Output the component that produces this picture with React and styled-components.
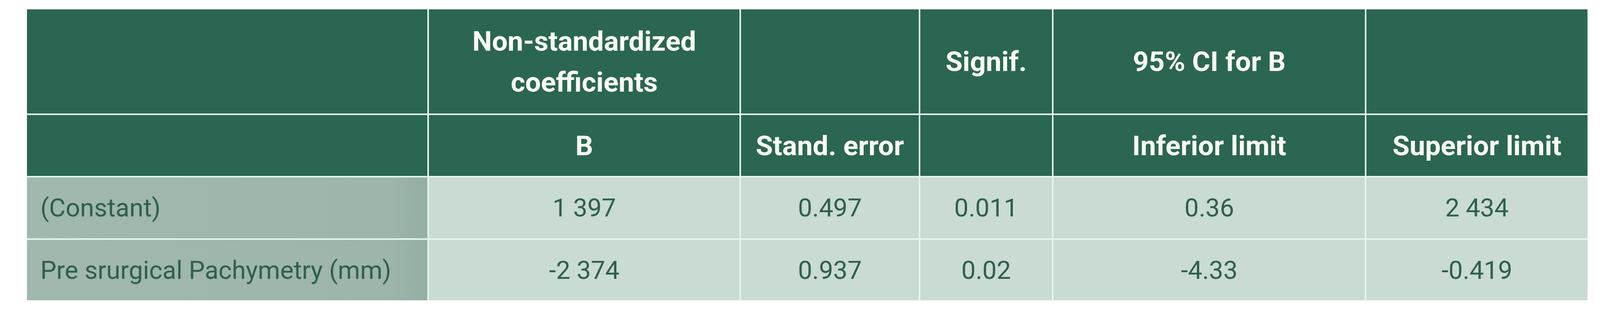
import styled, { createGlobalStyle } from "styled-components";

const GlobalStyle = createGlobalStyle`
  html, body {
    margin: 0;
    padding: 0;
    background: #ffffff;
  }
  body {
    font-family: Roboto, "Liberation Sans", sans-serif;
  }
`;

// Sizes were taken from a 5474px wide frame; widths and type scale with the viewport
// so the whole table stays visible when the window is narrower.
export const Page = styled.div`
  width: 100%;
  height: 800px;
  padding: 24px 0.7855vw 0 1.6807vw;
  box-sizing: border-box;
  background: #ffffff;
  overflow: hidden;
`;

export const Grid = styled.div`
  display: grid;
  grid-template-columns: 1372fr 1064fr 608fr 452fr 1066fr 757fr;
  grid-template-rows: 267px 156px 156px 155px;
  gap: 4px;
  width: 100%;
  background: #e2f6ef;
`;

export const HeadCell = styled.div`
  display: flex;
  align-items: center;
  justify-content: center;
  min-width: 0;
  text-align: center;
  background: #2a6652;
  color: #fbfbf3;
  font-weight: 700;
  font-size: 1.7355vw;
  line-height: 105px;
  white-space: nowrap;
`;

export const LabelCell = styled.div`
  display: flex;
  align-items: center;
  min-width: 0;
  padding-left: 0.8403vw;
  background: linear-gradient(90deg, #a0b8ad 0%, #9db5aa 90%, #95afa2 100%);
  color: #2f5f50;
  font-size: 1.5894vw;
  white-space: nowrap;
`;

export const ValueCell = styled.div`
  display: flex;
  align-items: center;
  justify-content: center;
  min-width: 0;
  background: #c9dbd3;
  color: #2f5f50;
  font-size: 1.5894vw;
  white-space: nowrap;
`;

const headTop = ["", "Non-standardized\ncoefficients", "", "Signif.", "95% CI for B", ""];
const headBottom = ["", "B", "Stand. error", "", "Inferior limit", "Superior limit"];

const rows = [
  { label: "(Constant)", values: ["1 397", "0.497", "0.011", "0.36", "2 434"] },
  {
    label: "Pre srurgical Pachymetry (mm)",
    values: ["-2 374", "0.937", "0.02", "-4.33", "-0.419"],
  },
];

const Lines = ({ text }) =>
  text.split("\n").map((line, i, all) => (
    <span key={i}>
      {line}
      {i < all.length - 1 && <br />}
    </span>
  ));

export default function App() {
  return (
    <>
      <GlobalStyle />
      <Page>
        <Grid>
          {headTop.map((t, i) => (
            <HeadCell key={`t${i}`}>
              <div>
                <Lines text={t} />
              </div>
            </HeadCell>
          ))}
          {headBottom.map((t, i) => (
            <HeadCell key={`b${i}`}>{t}</HeadCell>
          ))}
          {rows.map((r) => [
            <LabelCell key={r.label}>{r.label}</LabelCell>,
            ...r.values.map((v, i) => (
              <ValueCell key={`${r.label}${i}`}>{v}</ValueCell>
            )),
          ])}
        </Grid>
      </Page>
    </>
  );
}
